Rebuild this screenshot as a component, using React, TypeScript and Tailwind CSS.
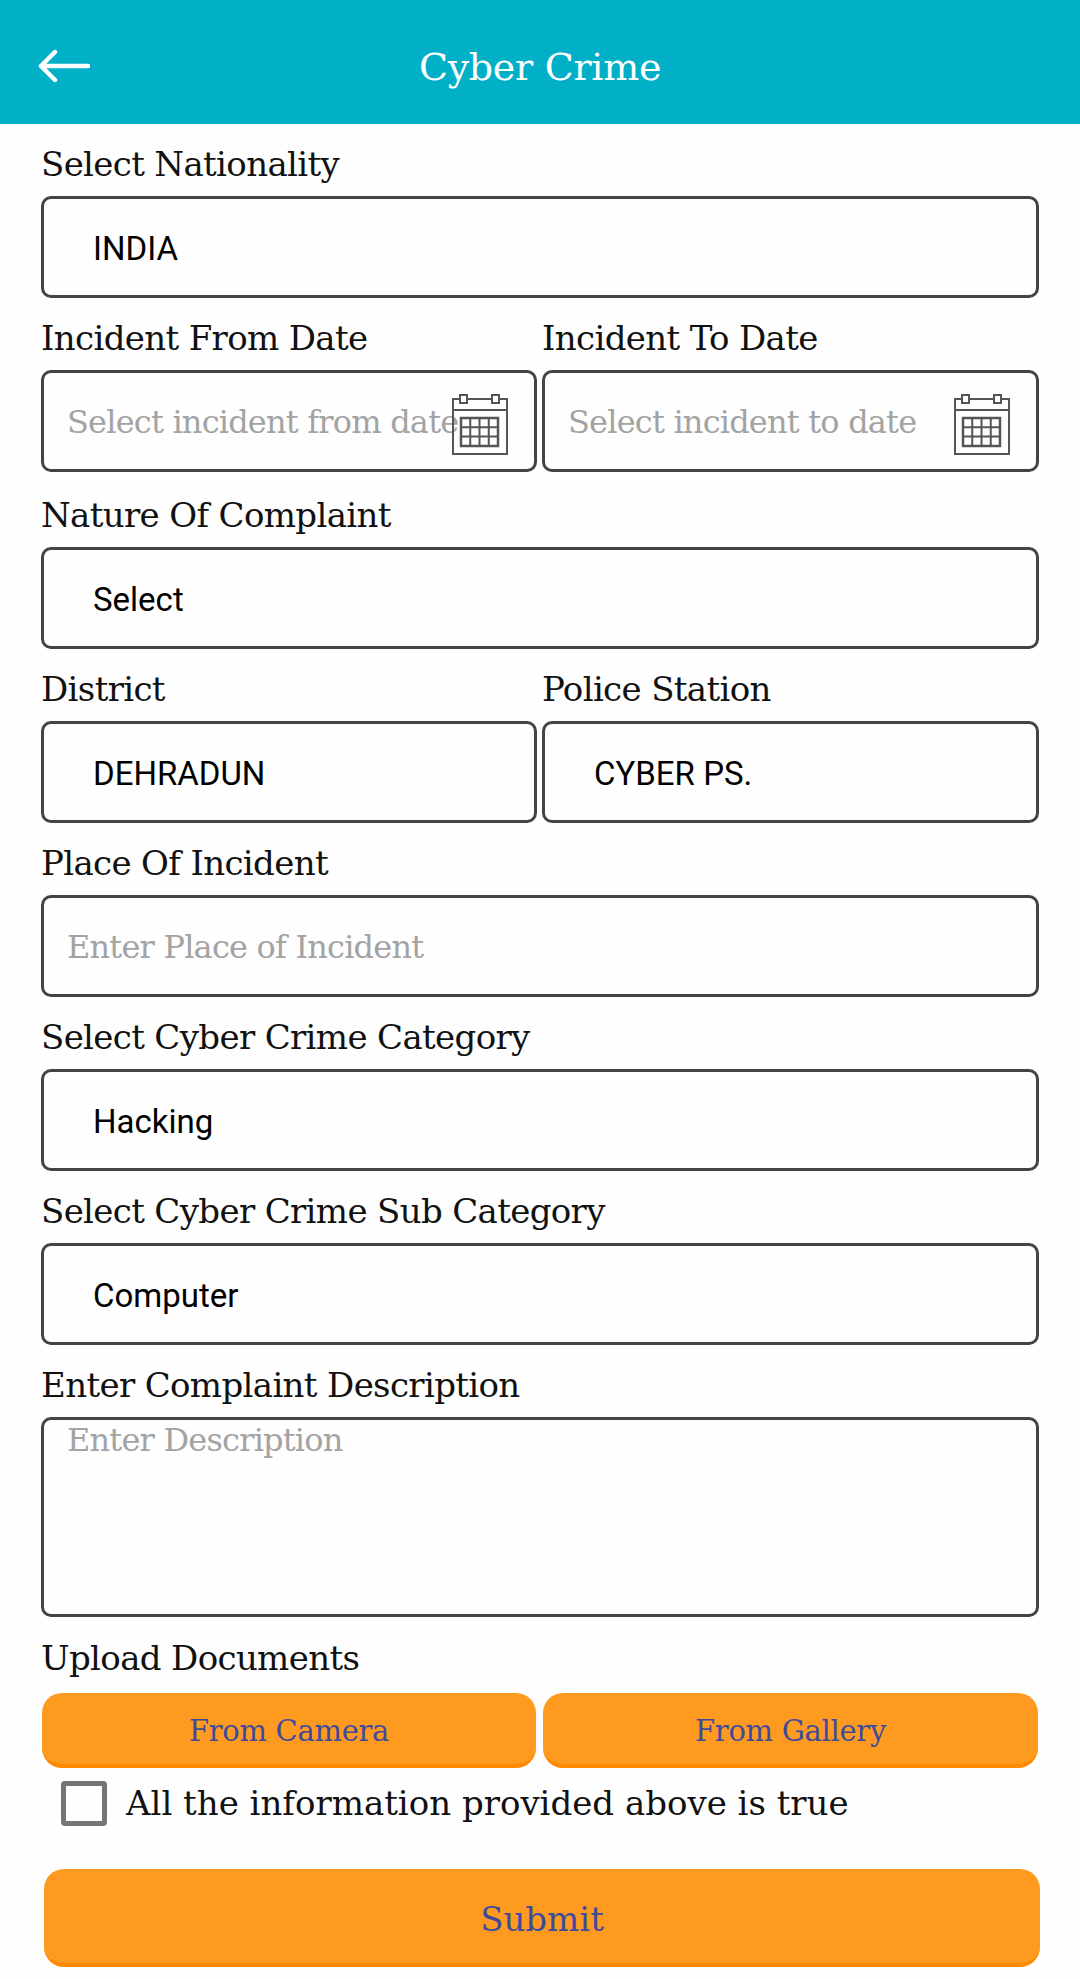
import type { ReactNode } from 'react'

function Label({ children }: { children: ReactNode }) {
  return (
    <div className="h-[72px] pt-[18px] font-['DejaVu_Serif',serif] text-[34px] leading-[44px] tracking-[-0.65px] text-[#111] whitespace-nowrap">
      {children}
    </div>
  )
}

function SelectBox({ value }: { value: string }) {
  return (
    <div className="flex h-[102px] items-center rounded-[10px] border-[3px] border-[#444] pl-[49px] pt-[3px] font-['Roboto',sans-serif] text-[33px] text-black">
      {value}
    </div>
  )
}

function CalendarIcon() {
  return (
    <svg width="56" height="61" viewBox="0 0 56 61" className="absolute right-[26px] top-[21px]" fill="none" stroke="#555">
      <path d="M1 5H55V60H1Z" strokeWidth="2" />
      <path d="M1 16H55" strokeWidth="2" />
      <rect x="8" y="1" width="7" height="8" fill="#fff" strokeWidth="2" />
      <rect x="40" y="1" width="7" height="8" fill="#fff" strokeWidth="2" />
      <path d="M9 24H46V52H9Z" strokeWidth="2.500" />
      <path d="M18.250 24V52M27.500 24V52M36.750 24V52M9 33.300H46M9 42.600H46" strokeWidth="2" />
    </svg>
  )
}

function DateBox({ placeholder }: { placeholder: string }) {
  return (
    <div className="relative flex h-[102px] items-center overflow-hidden whitespace-nowrap rounded-[10px] border-[3px] border-[#444] pl-[23px] pt-[2px] font-['DejaVu_Serif',serif] text-[32px] tracking-[-0.8px] text-[#a3a3a3]">
      {placeholder}
      <CalendarIcon />
    </div>
  )
}

function OrangeButton({ children, className }: { children: ReactNode; className: string }) {
  return (
    <button
      type="button"
      className={`flex items-center justify-center border-b-[4px] border-[#ff8a00] bg-[#ff9a20] font-['DejaVu_Serif',serif] text-[#3f4a9c] ${className}`}
    >
      {children}
    </button>
  )
}

export default function App() {
  return (
    <div className="h-[1979px] w-[1080px] overflow-hidden bg-[#fefefe]">
      <header className="relative flex h-[124px] items-center justify-center bg-[#01afc7] pt-[10px]">
        <svg width="52" height="32" viewBox="0 0 52 32" className="absolute left-[38px] top-[50px]" fill="none" stroke="#fff" strokeWidth="4.500" strokeLinecap="round" strokeLinejoin="round">
          <path d="M50 16H3M17 2L3 16L17 30" />
        </svg>
        <h1 className="font-['DejaVu_Serif',serif] text-[38px] font-normal tracking-[-0.3px] text-white">Cyber Crime</h1>
      </header>

      <main className="flex flex-col px-[41px]">
        <div>
          <Label>Select Nationality</Label>
          <SelectBox value="INDIA" />
        </div>

        <div className="grid grid-cols-[496px_497px] gap-x-[5px]">
          <div>
            <Label>Incident From Date</Label>
            <DateBox placeholder="Select incident from date" />
          </div>
          <div>
            <Label>Incident To Date</Label>
            <DateBox placeholder="Select incident to date" />
          </div>
        </div>

        <div className="mt-[3px]">
          <Label>Nature Of Complaint</Label>
          <SelectBox value="Select" />
        </div>

        <div className="grid grid-cols-[496px_497px] gap-x-[5px]">
          <div>
            <Label>District</Label>
            <SelectBox value="DEHRADUN" />
          </div>
          <div>
            <Label>Police Station</Label>
            <SelectBox value="CYBER PS." />
          </div>
        </div>

        <div>
          <Label>Place Of Incident</Label>
          <div className="flex h-[102px] items-center rounded-[10px] border-[3px] border-[#444] pl-[23px] pt-[1px] font-['DejaVu_Serif',serif] text-[32px] tracking-[-0.8px] text-[#a3a3a3]">
            Enter Place of Incident
          </div>
        </div>

        <div>
          <Label>Select Cyber Crime Category</Label>
          <SelectBox value="Hacking" />
        </div>

        <div>
          <Label>Select Cyber Crime Sub Category</Label>
          <SelectBox value="Computer" />
        </div>

        <div>
          <Label>Enter Complaint Description</Label>
          <div className="h-[200px] rounded-[10px] border-[3px] border-[#444] pl-[23px] pt-[5px] font-['DejaVu_Serif',serif] text-[32px] leading-[30px] tracking-[-0.8px] text-[#a3a3a3]">
            Enter Description
          </div>
        </div>

        <div className="h-[76px] pt-[19px] font-['DejaVu_Serif',serif] text-[34px] leading-[44px] tracking-[-0.65px] text-[#111]">
          Upload Documents
        </div>

        <div className="grid grid-cols-[494px_495px] gap-x-[7px] pl-[1px]">
          <OrangeButton className="h-[75px] rounded-[20px] pt-[7px] text-[29px] tracking-[-0.3px]">From Camera</OrangeButton>
          <OrangeButton className="h-[75px] rounded-[20px] pt-[7px] text-[29px] tracking-[-0.3px]">From Gallery</OrangeButton>
        </div>

        <label className="mt-[10px] flex items-center pl-[20px]">
          <span className="h-[45px] w-[46px] rounded-[4px] border-[5px] border-[#757575]" />
          <span className="ml-[19px] font-['DejaVu_Serif',serif] text-[34px] text-[#111]">All the information provided above is true</span>
        </label>

        <OrangeButton className="ml-[3px] mt-[40px] h-[98px] w-[996px] rounded-[20px] pt-[6px] text-[34px]">Submit</OrangeButton>
      </main>
    </div>
  )
}
